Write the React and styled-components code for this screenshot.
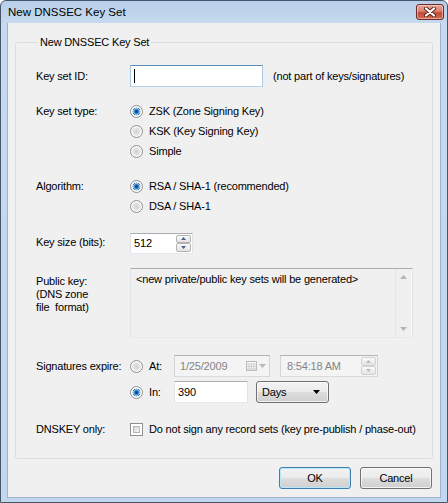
import React from 'react';
import styled, { createGlobalStyle } from 'styled-components';

const GlobalStyle = createGlobalStyle`
  html, body { margin: 0; padding: 0; background: #fff; }
  body {
    font-family: "Liberation Sans", Arial, sans-serif;
    font-size: 11px;
    letter-spacing: -0.18px;
    color: #000;
  }
  * { box-sizing: border-box; }
`;

const Window = styled.div`
  width: 448px;
  height: 503px;
  display: flex;
  flex-direction: column;
  border: 1px solid #46566a;
  border-radius: 6px 6px 0 0;
  background: linear-gradient(180deg, #b8cfe9 0px, #c6d9ef 22px, #c2d6ed 100%);
  overflow: hidden;
`;

const TitleBar = styled.div`
  height: 22px;
  flex: none;
  display: flex;
  align-items: center;
  padding: 0 3px 0 7px;
`;

const Title = styled.div`
  flex: 1;
  font-size: 11.5px;
  letter-spacing: 0;
  color: #000;
`;

const CloseButton = styled.div`
  width: 28px;
  height: 16px;
  margin-top: -1px;
  border: 1px solid #6b2b2a;
  border-radius: 3px;
  background: linear-gradient(180deg, #e6a898 0%, #d8806e 45%, #c14a36 55%, #cf6b50 100%);
  box-shadow: inset 0 0 0 1px rgba(255, 220, 210, 0.55);
  display: flex;
  align-items: center;
  justify-content: center;
`;

const Client = styled.div`
  flex: 1;
  margin: 0 6px 4px;
  border: 1px solid #9fb3cb;
  border-top: none;
  background: #f0f0f0;
  padding: 13px 7px 0;
  display: flex;
  flex-direction: column;
`;

const Group = styled.fieldset`
  margin: 0;
  padding: 0 0 19px 20px;
  border: 1px solid #d5dfe5;
  border-radius: 3px;
  min-width: 0;
`;

const Legend = styled.legend`
  margin-left: 2px;
  padding: 0 2px;
  line-height: 13px;
  color: #000;
`;

const Row = styled.div`
  display: grid;
  grid-template-columns: 94px 1fr;
  align-items: start;
  margin-top: ${p => p.$mt || 0}px;
`;

const Label = styled.div`
  line-height: ${p => p.$h || 13}px;
  padding-top: ${p => p.$pt || 0}px;
  white-space: nowrap;
`;

const Line = styled.div`
  display: flex;
  align-items: center;
  height: 22px;
  margin-top: ${p => p.$mt || 0}px;
`;

const Hint = styled.span`
  margin-left: 10px;
  white-space: nowrap;
`;

const Options = styled.div`
  display: flex;
  flex-direction: column;
`;

const Option = styled.label`
  display: flex;
  align-items: center;
  gap: 6px;
  height: 20px;
  white-space: nowrap;
  width: ${p => (p.$w ? `${p.$w}px` : 'auto')};
  flex: none;
`;

const Radio = styled.span`
  width: 13px;
  height: 13px;
  flex: none;
  border-radius: 50%;
  border: 1px solid #8e8f8f;
  background: ${p =>
    p.$checked
      ? 'radial-gradient(circle at 50% 50%, #0b3b78 0, #1a5fae 1.4px, #4f9be0 2.5px, #9fd0f4 3.2px, #3a6ea5 3.7px, rgba(255,255,255,0) 4.1px), '
      : ''}radial-gradient(circle at 50% 50%, #d2d2d2 0, #dedede 2.5px, #ececec 4.2px, #fdfdfd 4.8px, #fdfdfd 6px);
`;

const Checkbox = styled.span`
  width: 13px;
  height: 13px;
  flex: none;
  border: 1px solid #8f8f8f;
  background: #fff;
  padding: 2px;
  display: flex;
  & > i {
    flex: 1;
    border: 1px solid #b4b8bd;
    background: linear-gradient(135deg, #d0d3d8 0%, #ecedee 70%, #f7f7f7 100%);
  }
`;

const TextBox = styled.div`
  width: ${p => p.$w}px;
  height: ${p => p.$h || 22}px;
  flex: none;
  margin-left: ${p => p.$ml || 0}px;
  border: 1px solid;
  border-color: ${p =>
    p.$focused
      ? '#5b8fbd #a9c8e3 #b7d3ec #a9c8e3'
      : p.$disabled
        ? '#b4b4b4 #d4d4d4 #dadada #d4d4d4'
        : '#abadb3 #e2e3ea #e3e9ef #e2e3ea'};
  background: ${p => (p.$disabled ? '#f4f4f4' : '#fff')};
  color: ${p => (p.$disabled ? '#858585' : '#000')};
  display: flex;
  align-items: center;
  padding-left: ${p => p.$pl || 3}px;
  white-space: nowrap;
`;

const Caret = styled.span`
  width: 1px;
  height: 14px;
  background: #000;
`;

const Spin = styled.div`
  margin-left: auto;
  width: 16px;
  align-self: stretch;
  display: flex;
  flex-direction: column;
  padding: 1px 1px 1px 0;
`;

const SpinButton = styled.div`
  flex: 1;
  border: 1px solid ${p => (p.$disabled ? '#d2d2d2' : '#b3b3b3')};
  border-radius: 2px;
  background: linear-gradient(180deg, #fbfbfb 0%, #eeeeee 50%, #e2e2e2 100%);
  display: flex;
  align-items: center;
  justify-content: center;
`;

const PickerIcons = styled.div`
  margin-left: auto;
  margin-right: 3px;
  display: flex;
  align-items: center;
  gap: 2px;
`;

const TextArea = styled.div`
  width: 283px;
  height: 70px;
  border: 1px solid;
  border-color: #abadb3 #e2e3ea #e3e9ef #e2e3ea;
  background: #f0f0f0;
  display: flex;
`;

const AreaText = styled.div`
  flex: 1;
  padding: 4px 0 0 5px;
  line-height: 13px;
`;

const ScrollBar = styled.div`
  width: 17px;
  border-left: 1px solid #e6e6e6;
  border-right: 1px solid #f8f8f8;
  background: #f0f0f0;
  display: flex;
  flex-direction: column;
  justify-content: space-between;
`;

const ScrollArrow = styled.div`
  height: 16px;
  display: flex;
  align-items: center;
  justify-content: center;
`;

const Combo = styled.div`
  width: 73px;
  height: 22px;
  flex: none;
  margin-left: ${p => p.$ml || 0}px;
  border: 1px solid #707070;
  border-radius: 3px;
  background: linear-gradient(180deg, #f2f2f2 0%, #ebebeb 50%, #dddddd 51%, #cfcfcf 100%);
  box-shadow: inset 0 0 0 1px rgba(255, 255, 255, 0.7);
  display: flex;
  align-items: center;
  padding: 0 8px 0 5px;
  justify-content: space-between;
`;

const ButtonBar = styled.div`
  display: flex;
  justify-content: flex-end;
  gap: 9px;
  margin-top: 8px;
  padding-right: 1px;
`;

const Button = styled.div`
  width: 72px;
  height: 22px;
  border: 1px solid ${p => (p.$default ? '#3c7fb1' : '#707070')};
  border-radius: 3px;
  background: linear-gradient(180deg, #f2f2f2 0%, #ebebeb 50%, #dddddd 51%, #cfcfcf 100%);
  box-shadow: inset 0 0 0 1px ${p => (p.$default ? '#b8e6fb' : 'rgba(255,255,255,0.75)')};
  display: flex;
  align-items: center;
  justify-content: center;
`;

const Arrow = ({ dir = 'down', color = '#000', w = 7, h = 4 }) => (
  <svg width={w} height={h} viewBox={`0 0 ${w} ${h}`}>
    {dir === 'down' ? (
      <polygon points={`0,0 ${w},0 ${w / 2},${h}`} fill={color} />
    ) : (
      <polygon points={`0,${h} ${w},${h} ${w / 2},0`} fill={color} />
    )}
  </svg>
);

const CloseGlyph = () => (
  <svg width="14" height="10" viewBox="0 0 14 10">
    <path d="M3 1.5 L11 8.5 M11 1.5 L3 8.5" stroke="#5a1f1a" strokeWidth="4" strokeLinecap="round" />
    <path d="M3 1.5 L11 8.5 M11 1.5 L3 8.5" stroke="#fff" strokeWidth="2.2" strokeLinecap="round" />
  </svg>
);

const CalendarGlyph = () => (
  <svg width="11" height="10" viewBox="0 0 11 10">
    <rect x="0.5" y="0.5" width="10" height="9" fill="#f8f8f8" stroke="#b9b9b9" />
    <path d="M0.5 3 H10.5 M0.5 5.5 H10.5 M0.5 8 H10.5 M3 3 V9.5 M5.5 3 V9.5 M8 3 V9.5" stroke="#cfcfcf" />
  </svg>
);

export default function App() {
  return (
    <>
      <GlobalStyle />
      <Window>
        <TitleBar>
          <Title>New DNSSEC Key Set</Title>
          <CloseButton aria-label="Close">
            <CloseGlyph />
          </CloseButton>
        </TitleBar>
        <Client>
          <Group>
            <Legend>New DNSSEC Key Set</Legend>

            <Row $mt={16}>
              <Label $h={22}>Key set ID:</Label>
              <Line>
                <TextBox $w={133} $focused>
                  <Caret />
                </TextBox>
                <Hint>(not part of keys/signatures)</Hint>
              </Line>
            </Row>

            <Row $mt={14}>
              <Label $h={20}>Key set type:</Label>
              <Options>
                <Option><Radio $checked />ZSK (Zone Signing Key)</Option>
                <Option><Radio />KSK (Key Signing Key)</Option>
                <Option><Radio />Simple</Option>
              </Options>
            </Row>

            <Row $mt={15}>
              <Label $h={20}>Algorithm:</Label>
              <Options>
                <Option><Radio $checked />RSA / SHA-1 (recommended)</Option>
                <Option><Radio />DSA / SHA-1</Option>
              </Options>
            </Row>

            <Row $mt={16}>
              <Label $h={21}>Key size (bits):</Label>
              <Line>
                <TextBox $w={63} $h={21}>
                  512
                  <Spin>
                    <SpinButton><Arrow dir="up" color="#4d6185" w={5} h={3} /></SpinButton>
                    <SpinButton><Arrow dir="down" color="#4d6185" w={5} h={3} /></SpinButton>
                  </Spin>
                </TextBox>
              </Line>
            </Row>

            <Row $mt={14}>
              <Label $pt={7}>
                Public key:
                <br />
                (DNS zone
                <br />
                file&nbsp; format)
              </Label>
              <TextArea>
                <AreaText>&lt;new private/public key sets will be generated&gt;</AreaText>
                <ScrollBar>
                  <ScrollArrow><Arrow dir="up" color="#b4b4b4" /></ScrollArrow>
                  <ScrollArrow><Arrow dir="down" color="#b4b4b4" /></ScrollArrow>
                </ScrollBar>
              </TextArea>
            </Row>

            <Row $mt={17}>
              <Label $h={22}>Signatures expire:</Label>
              <Options>
                <Line>
                  <Option $w={44}><Radio />At:</Option>
                  <TextBox $w={96} $disabled $pl={5}>
                    1/25/2009
                    <PickerIcons>
                      <CalendarGlyph />
                      <Arrow dir="down" color="#b9b9b9" />
                    </PickerIcons>
                  </TextBox>
                  <TextBox $w={98} $ml={10} $disabled $pl={6}>
                    8:54:18 AM
                    <Spin>
                      <SpinButton $disabled><Arrow dir="up" color="#b9b9b9" w={5} h={3} /></SpinButton>
                      <SpinButton $disabled><Arrow dir="down" color="#b9b9b9" w={5} h={3} /></SpinButton>
                    </Spin>
                  </TextBox>
                </Line>
                <Line $mt={4}>
                  <Option $w={44}><Radio $checked />In:</Option>
                  <TextBox $w={74}>390</TextBox>
                  <Combo $ml={8}>
                    Days
                    <Arrow dir="down" color="#000" />
                  </Combo>
                </Line>
              </Options>
            </Row>

            <Row $mt={16}>
              <Label $h={20}>DNSKEY only:</Label>
              <Option>
                <Checkbox><i /></Checkbox>
                Do not sign any record sets (key pre-publish / phase-out)
              </Option>
            </Row>
          </Group>

          <ButtonBar>
            <Button $default>OK</Button>
            <Button>Cancel</Button>
          </ButtonBar>
        </Client>
      </Window>
    </>
  );
}
